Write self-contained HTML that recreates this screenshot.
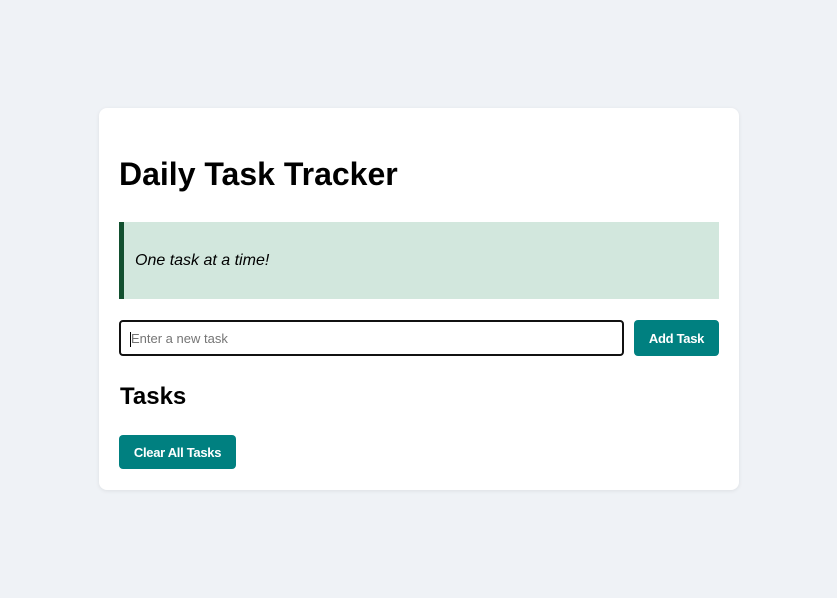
<!DOCTYPE html>
<html><head><style>
body{margin:0;background:#eff2f6;font-family:"Liberation Sans",sans-serif;width:837px;height:598px;position:relative}
.card{position:absolute;left:99px;top:108px;width:640px;height:382px;background:#fff;border-radius:8px;box-shadow:0 1px 4px rgba(0,0,0,.08)}
h1{position:absolute;left:20px;top:48px;margin:0;font-size:32px;font-weight:bold;line-height:37px}
.bq{position:absolute;left:20px;top:114px;width:595px;height:77px;background:#d2e7dd;border-left:5px solid #12502f}
.bq span{position:absolute;left:11px;top:30px;font-style:italic;font-size:16px}
.inp{position:absolute;left:20px;top:212px;height:32px;border:2px solid #111;border-radius:4px;font-size:13px;color:#757575;line-height:34px;padding-left:10px;box-sizing:content-box;width:491px}
.inp:before{content:"";position:absolute;left:9px;top:10px;width:1px;height:15px;background:#000}
.btn{position:absolute;background:#008080;color:#fff;font-size:13px;font-weight:bold;border-radius:4px;text-align:center;letter-spacing:-0.3px}
h2{position:absolute;left:21px;top:275px;margin:0;font-size:24px;line-height:28px}
</style></head><body>
<div class="card">
<h1>Daily Task Tracker</h1>
<div class="bq"><span>One task at a time!</span></div>
<div class="inp">Enter a new task</div>
<div class="btn" style="left:535px;top:212px;width:85px;height:36px;line-height:38px">Add Task</div>
<h2>Tasks</h2>
<div class="btn" style="left:20px;top:327px;width:117px;height:34px;line-height:36px">Clear All Tasks</div>
</div>
</body></html>
